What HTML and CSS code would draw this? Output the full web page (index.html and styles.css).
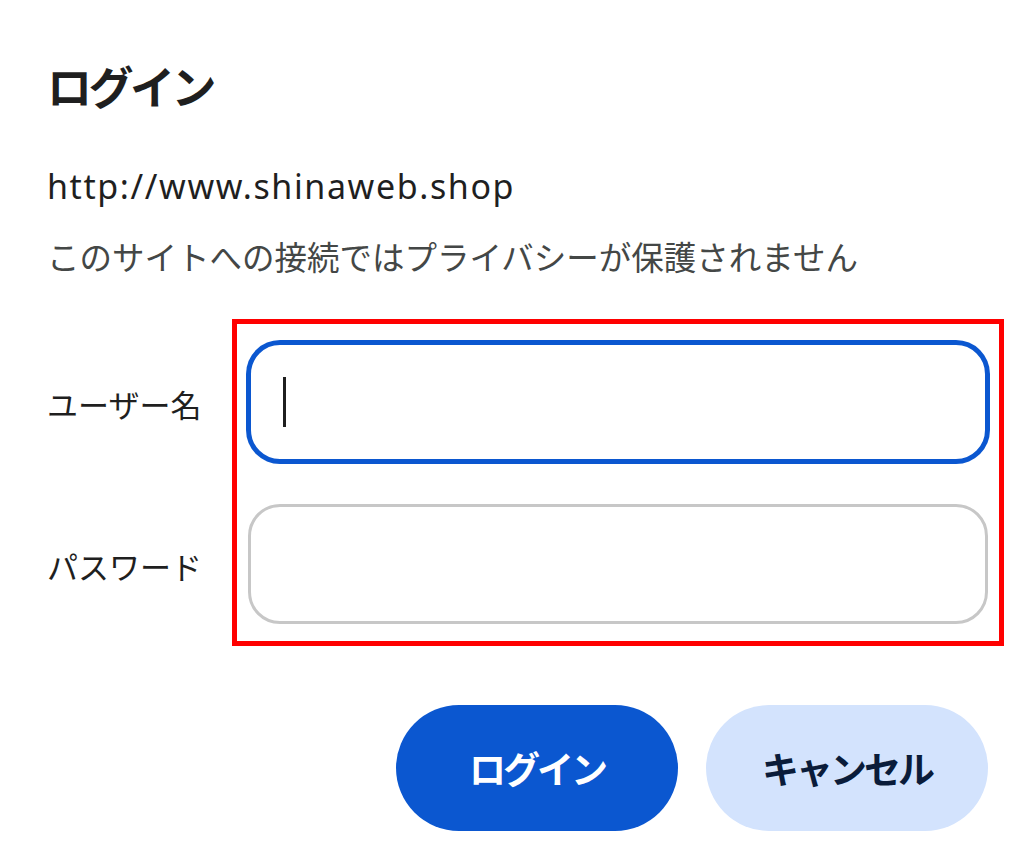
FILE: index.html
```html
<!DOCTYPE html>
<html lang="ja">
<head>
<meta charset="utf-8">
<link rel="stylesheet" href="styles.css">
</head>
<body>
<div class="dialog">
  <h1 class="title">ログイン</h1>
  <p class="url">http://www.shinaweb.shop</p>
  <p class="note">このサイトへの接続ではプライバシーが保護されません</p>
  <div class="form">
    <div class="labels">
      <div class="label">ユーザー名</div>
      <div class="label">パスワード</div>
    </div>
    <div class="highlight">
      <div class="field focused"><span class="caret"></span></div>
      <div class="field"></div>
    </div>
  </div>
  <div class="actions">
    <div class="btn primary">ログイン</div>
    <div class="btn secondary">キャンセル</div>
  </div>
</div>
</body>
</html>
```
FILE: styles.css
```css
html, body {
  margin: 0;
  background: #ffffff;
}
body {
  font-family: "Noto Sans CJK JP", "Noto Sans", sans-serif;
  color: #1f1f1f;
}
.dialog {
  width: 1024px;
  height: 865px;
  padding: 48px 0 0 47px;
  box-sizing: border-box;
}
.title {
  margin: 0;
  font-size: 45px;
  font-weight: 700;
  line-height: 76px;
  letter-spacing: -3.5px;
  color: #1f1f1f;
}
.url {
  margin: 42px 0 0;
  font-family: "Noto Sans", "Noto Sans CJK JP", sans-serif;
  font-size: 34px;
  letter-spacing: 1.6px;
  line-height: 40px;
  color: #1f1f1f;
}
.note {
  margin: 30px 0 0;
  font-size: 32.5px;
  line-height: 40px;
  color: #444746;
}
.form {
  display: flex;
  margin-top: 43px;
}
.labels {
  width: 185px;
  display: flex;
  flex-direction: column;
  padding-top: 24px;
}
.label {
  height: 120px;
  display: flex;
  align-items: center;
  font-size: 31px;
  color: #1f1f1f;
}
.label + .label {
  margin-top: 42px;
}
.highlight {
  width: 772px;
  height: 327px;
  box-sizing: border-box;
  border: 5px solid #ff0000;
  padding: 18px 11px 0;
  display: flex;
  flex-direction: column;
  gap: 42px;
}
.field {
  height: 120px;
  box-sizing: border-box;
  border: 3px solid #c7c7c7;
  border-radius: 32px;
  background: #fff;
  display: flex;
  align-items: center;
  padding-left: 32px;
}
.field.focused {
  border-color: #0b57d0;
  box-shadow: 0 0 0 2px #0b57d0;
}
.caret {
  width: 3px;
  height: 50px;
  background: #1f1f1f;
}
.actions {
  display: flex;
  gap: 28px;
  margin-top: 59px;
  padding-left: 349px;
}
.btn {
  width: 282px;
  height: 126px;
  border-radius: 63px;
  display: flex;
  align-items: center;
  justify-content: center;
  font-size: 37px;
  font-weight: 700;
  letter-spacing: -3px;
}
.primary {
  background: #0b57d0;
  color: #ffffff;
}
.secondary {
  background: #d3e3fd;
  color: #0a1c3a;
}
```
